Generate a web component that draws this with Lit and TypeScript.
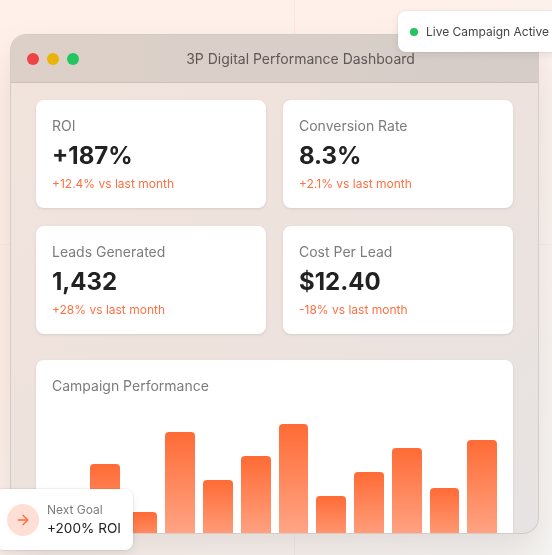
import { LitElement, html, css } from "lit";
import { customElement } from "lit/decorators.js";

const stats = [
  { label: "ROI", value: "+187%", delta: "+12.4% vs last month" },
  { label: "Conversion Rate", value: "8.3%", delta: "+2.1% vs last month" },
  { label: "Leads Generated", value: "1,432", delta: "+28% vs last month" },
  { label: "Cost Per Lead", value: "$12.40", delta: "-18% vs last month" },
];
const bars = [40, 60, 30, 80, 50, 65, 85, 40, 55, 70, 45, 75];

@customElement("app-root")
export class AppRoot extends LitElement {
  static styles = css`
    :host {
      display: block;
      position: relative;
      width: 552px;
      height: 555px;
      overflow: hidden;
      font-family: Inter, "Liberation Sans", sans-serif;
      background:
        linear-gradient(90deg, transparent 294px, rgba(255, 107, 53, 0.07) 294px, rgba(255, 107, 53, 0.07) 295px, transparent 295px),
        linear-gradient(180deg, transparent 244px, rgba(255, 107, 53, 0.07) 244px, rgba(255, 107, 53, 0.07) 245px, transparent 245px),
        linear-gradient(135deg, #fff0e9 0%, #fff0e9 35%, #f8f6f4 100%);
    }
    .page {
      box-sizing: border-box;
      height: 555px;
      padding: 34px 13px 0 10px;
    }
    .window {
      box-sizing: border-box;
      height: 499.5px;
      border: 1px solid rgba(0, 0, 0, 0.1);
      border-radius: 16px;
      overflow: hidden;
      background: linear-gradient(135deg, #f2e4dd 0%, #eee2dd 50%, #e6e3e2 100%);
      box-shadow: 0 20px 40px rgba(0, 0, 0, 0.1);
      will-change: transform;
    }
    .titlebar {
      display: flex;
      align-items: center;
      box-sizing: border-box;
      height: 48px;
      padding: 0 16px;
      background: linear-gradient(90deg, #ddd0c9, #d6cdc8);
      border-bottom: 1px solid #cbbfb9;
    }
    .dots { display: flex; gap: 8px; }
    .dot { width: 12px; height: 12px; border-radius: 50%; }
    .red { background: #ef4444; }
    .yellow { background: #eab308; }
    .green { background: #22c55e; }
    .title {
      flex: 1;
      text-align: center;
      font-size: 14px;
      color: #5f5754;
    }
    .content { padding: 17px 25px 0; }
    .grid {
      display: grid;
      grid-template-columns: 230px 230px;
      column-gap: 17px;
      row-gap: 18px;
      margin-bottom: 26px;
    }
    .card, .chart-card {
      background: #fff;
      border-radius: 8px;
      box-shadow: 0 1px 3px rgba(0, 0, 0, 0.1);
    }
    .card {
      box-sizing: border-box;
      height: 108px;
      padding: 15px 16px 0;
    }
    .label { font-size: 14px; line-height: 21px; color: #7c7c7c; }
    .card .label { margin-bottom: 2px; }
    .value { font-size: 24px; line-height: 36px; font-weight: 700; color: #222; }
    .delta { font-size: 12px; line-height: 18px; margin-top: 1px; color: #ff7043; }
    .chart-card { padding: 15px 16px 0; height: 200px; box-sizing: border-box; }
    .chart {
      display: flex;
      align-items: flex-end;
      gap: 8px;
      height: 160px;
      margin-top: 4px;
    }
    .bar {
      flex: 1;
      border-radius: 4px 4px 0 0;
      background: linear-gradient(180deg, #ff6b35, #ffb399);
    }
    .live {
      position: absolute;
      left: 398px;
      top: 11px;
      display: flex;
      align-items: center;
      gap: 8px;
      padding: 12px;
      background: #fff;
      border-radius: 8px;
      box-shadow: 0 0 0 1px rgba(0, 0, 0, 0.04), 0 3px 8px rgba(0, 0, 0, 0.08);
      font-size: 12px;
      line-height: 17px;
      color: #444;
      white-space: nowrap;
      will-change: transform;
    }
    .live-dot { width: 8px; height: 8px; border-radius: 50%; background: #22c55e; }
    .goal {
      position: absolute;
      left: -5px;
      top: 488.5px;
      display: flex;
      align-items: center;
      gap: 8px;
      padding: 12px;
      background: #fff;
      border-radius: 8px;
      box-shadow: 0 0 0 1px rgba(0, 0, 0, 0.05), 0 4px 10px rgba(0, 0, 0, 0.08);
      will-change: transform;
    }
    .goal-icon {
      display: flex;
      align-items: center;
      justify-content: center;
      width: 32px;
      height: 32px;
      border-radius: 50%;
      background: #ffdfd5;
      color: #ff6b35;
    }
    .goal-label { font-size: 12px; line-height: 18px; color: #7c7c7c; }
    .goal-value { font-size: 13.6px; line-height: 19px; font-weight: 400; color: #222; }
  `;

  render() {
    return html`
      <div class="page">
        <div class="window">
          <div class="titlebar">
            <div class="dots">
              <span class="dot red"></span><span class="dot yellow"></span><span class="dot green"></span>
            </div>
            <div class="title">3P Digital Performance Dashboard</div>
          </div>
          <div class="content">
            <div class="grid">
              ${stats.map(
                (s) => html`<div class="card">
                  <div class="label">${s.label}</div>
                  <div class="value">${s.value}</div>
                  <div class="delta">${s.delta}</div>
                </div>`
              )}
            </div>
            <div class="chart-card">
              <div class="label">Campaign Performance</div>
              <div class="chart">
                ${bars.map((b) => html`<div class="bar" style="height:${b}%"></div>`)}
              </div>
            </div>
          </div>
        </div>
      </div>
      <div class="live"><span class="live-dot"></span>Live Campaign Active</div>
      <div class="goal">
        <div class="goal-icon">
          <svg width="16" height="16" viewBox="0 0 24 24" fill="none" stroke="currentColor" stroke-width="2" stroke-linecap="round" stroke-linejoin="round"><path d="M5 12h14"></path><path d="m12 5 7 7-7 7"></path></svg>
        </div>
        <div>
          <div class="goal-label">Next Goal</div>
          <div class="goal-value">+200% ROI</div>
        </div>
      </div>
    `;
  }
}
